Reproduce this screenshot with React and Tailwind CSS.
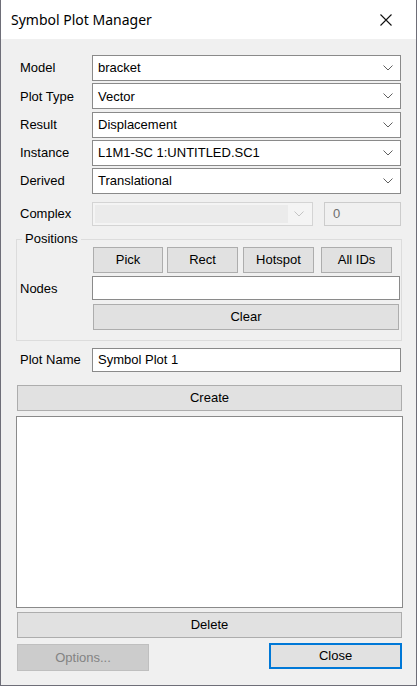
import React from 'react';

const font = { fontFamily: '"Liberation Sans", Arial, sans-serif' };

function Chevron({ disabled }) {
  return (
    <svg width="10" height="6" viewBox="0 0 10 6" className="shrink-0">
      <path d="M0.5 0.5 L5 5 L9.5 0.5" fill="none" stroke={disabled ? '#c4c4c4' : '#606060'} strokeWidth="1" />
    </svg>
  );
}

function Combo({ value }) {
  return (
    <div className="flex-1 h-[26px] bg-white border border-[#8a8a8a] flex items-center pl-[5px] pr-[7px]">
      <span className="flex-1 text-[13px] text-black">{value}</span>
      <Chevron />
    </div>
  );
}

function Row({ label, children }) {
  return (
    <div className="flex items-center">
      <span className="w-[76px] pl-[4px] text-[13px] text-black">{label}</span>
      {children}
    </div>
  );
}

function Btn({ children, className = '' }) {
  return (
    <div className={`h-[26px] bg-[#e1e1e1] border border-[#adadad] flex items-center justify-center text-[13px] text-black ${className}`}>
      {children}
    </div>
  );
}

export default function App() {
  return (
    <div style={font} className="w-[417px] h-[686px] bg-[#f0f0f0] border-x border-b border-[#6e6e78] flex flex-col overflow-hidden">
      {/* title bar */}
      <div className="h-[39px] bg-white flex items-center pl-[10px] pr-[24px] shrink-0">
        <span className="flex-1 text-[14px] text-black" style={{ fontFamily: '"Noto Sans", "Open Sans", sans-serif' }}>Symbol Plot Manager</span>
        <svg width="12" height="12" viewBox="0 0 12 12">
          <path d="M0.5 0.5 L11.5 11.5 M11.5 0.5 L0.5 11.5" stroke="#111" strokeWidth="1.1" />
        </svg>
      </div>

      <div className="flex flex-col pl-[15px] pr-[14px]">
        <div className="flex flex-col gap-[2.3px] mt-[16px] pr-[1px]">
          <Row label="Model"><Combo value="bracket" /></Row>
          <Row label="Plot Type"><Combo value="Vector" /></Row>
          <Row label="Result"><Combo value="Displacement" /></Row>
          <Row label="Instance"><Combo value="L1M1-SC 1:UNTITLED.SC1" /></Row>
          <Row label="Derived"><Combo value="Translational" /></Row>
        </div>

        <div className="mt-[8px] pr-[1px]">
          <Row label="Complex">
            <div className="w-[221px] h-[24px] border border-[#d4d4d4] bg-[#f4f4f4] p-[2px] flex items-center">
              <div className="flex-1 h-full bg-[#ebebeb]" />
              <div className="w-[22px] flex justify-center"><Chevron disabled /></div>
            </div>
            <div className="ml-[11px] flex-1 h-[24px] border border-[#cccccc] bg-[#f0f0f0] flex items-center pl-[8px] text-[13px] text-[#6d6d6d]">0</div>
          </Row>
        </div>

        {/* positions group */}
        <div className="relative mt-[13px] h-[102px] border border-[#dcdcdc] pr-[1px]">
          <span className="absolute -top-[9px] left-[5px] bg-[#f0f0f0] px-[3px] text-[13px] leading-[16px] text-black">Positions</span>
          <div className="flex mt-[7px] ml-[76px]">
            <Btn className="w-[70px]">Pick</Btn>
            <Btn className="w-[71px] ml-[4px]">Rect</Btn>
            <Btn className="w-[71px] ml-[5px]">Hotspot</Btn>
            <Btn className="w-[71px] ml-[7px]">All IDs</Btn>
          </div>
          <div className="flex items-center mt-[3px]">
            <span className="w-[75px] pl-[3px] text-[13px] text-black translate-y-[1px]">Nodes</span>
            <div className="flex-1 h-[24px] bg-white border border-[#8a8a8a]" />
          </div>
          <Btn className="mt-[4px] ml-[76px] mr-[1px]">Clear</Btn>
        </div>

        <div className="mt-[7px] pr-[1px]">
          <Row label="Plot Name">
            <div className="flex-1 h-[24px] bg-white border border-[#8a8a8a] flex items-center pl-[5px] text-[13px] text-black">Symbol Plot 1</div>
          </Row>
        </div>

        <Btn className="mt-[13px] ml-[1px]">Create</Btn>

        <div className="mt-[5px] h-[192px] bg-white border border-[#8a8a8a] mr-[-1px]" />

        <Btn className="mt-[4px] ml-[1px]">Delete</Btn>

        <div className="flex items-start mt-[5px]">
          <div className="mt-[1px] ml-[1px] w-[132px] h-[27px] bg-[#cccccc] border border-[#bfbfbf] flex items-center justify-center text-[13px] text-[#838383]">Options...</div>
          <div className="flex-1" />
          <div className="w-[133px] h-[26px] bg-[#e1e1e1] border-2 border-[#0078d7] flex items-center justify-center text-[13px] text-black">Close</div>
        </div>
      </div>
    </div>
  );
}
